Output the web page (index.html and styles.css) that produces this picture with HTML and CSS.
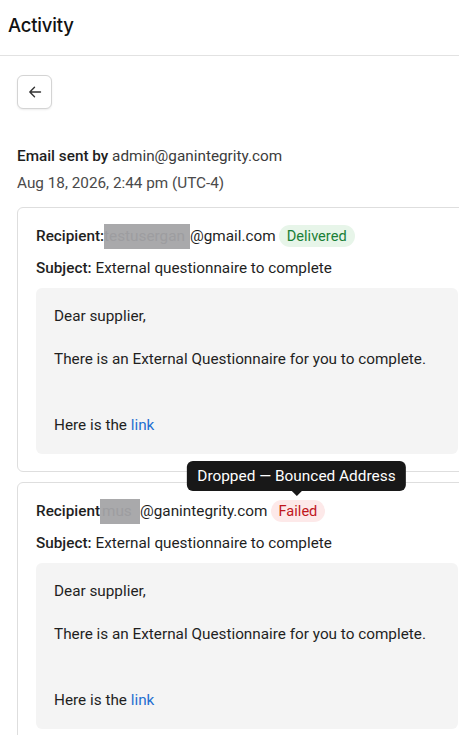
FILE: index.html
```html
<!DOCTYPE html>
<html>
<head>
<meta charset="utf-8">
<link rel="stylesheet" href="styles.css">
</head>
<body>
<header class="topbar"><h1 class="title">Activity</h1></header>
<main class="content">
  <button class="back" aria-label="Back">
    <svg width="14" height="14" viewBox="0 0 14 14" fill="none" stroke="#333" stroke-width="1.4" stroke-linecap="round" stroke-linejoin="round"><path d="M12.5 7H1.8M6.5 2.3L1.8 7l4.7 4.7"/></svg>
  </button>
  <div class="meta">
    <div class="meta-line"><span class="label">Email sent by</span> <span class="value">admin@ganintegrity.com</span></div>
    <div class="meta-date">Aug 18, 2026, 2:44 pm (UTC-4)</div>
  </div>
  <section class="card">
    <div class="row"><span class="label">Recipient:</span><span class="redact r1">testusergan</span>@gmail.com<span class="badge ok">Delivered</span></div>
    <div class="row subj"><span class="label">Subject:</span> External questionnaire to complete</div>
    <div class="msg">
      <p>Dear supplier,</p>
      <p>There is an External Questionnaire for you to complete.<br><br><br>Here is the <a href="#">link</a></p>
    </div>
  </section>
  <section class="card">
    <div class="row"><span class="label">Recipient</span><span class="redact r2">mus</span>@ganintegrity.com<span class="badge-wrap"><span class="tooltip">Dropped — Bounced Address</span><span class="badge fail">Failed</span></span></div>
    <div class="row subj"><span class="label">Subject:</span> External questionnaire to complete</div>
    <div class="msg">
      <p>Dear supplier,</p>
      <p>There is an External Questionnaire for you to complete.<br><br><br>Here is the <a href="#">link</a></p>
    </div>
  </section>
</main>
</body>
</html>
```
FILE: styles.css
```css
html, body { margin: 0; padding: 0; overflow: hidden; background: #fff; }
body { font-family: Roboto, "Noto Sans", sans-serif; font-size: 15.3px; color: #1f1f1f; width: 459px; height: 735px; }
.topbar { height: 55px; border-bottom: 1px solid #e2e2e2; display: flex; align-items: center; padding-left: 8px; }
.title { margin: 0; font-family: Inter, Roboto, sans-serif; font-size: 18.5px; font-weight: 500; color: #111; letter-spacing: -0.2px; position: relative; top: -3px; }
.content { padding: 19px 0 0 17px; }
.back { width: 35px; height: 34px; border: 1px solid #d4d4d4; border-radius: 6px; background: #fff; display: flex; align-items: center; justify-content: center; padding: 0; box-shadow: 0 1px 2px rgba(0,0,0,0.08); }
.meta { margin-top: 37px; }
.meta-line { line-height: 20px; }
.label { font-weight: 500; color: #1f1f1f; }
.value { color: #3c3c3c; }
.meta-date { color: #4a4a4a; margin-top: 7px; line-height: 20px; }
.card { width: 422px; border: 1px solid #dedede; border-radius: 6px; padding: 17px 18px 17px 18px; margin-top: 14px; }
.card + .card { margin-top: 10px; }
.row { display: flex; align-items: center; height: 22px; line-height: 22px; white-space: nowrap; }
.subj { margin-top: 10px; }
.subj .label { margin-right: 4px; }
.redact { background: #a9a9ab; color: #9d9da0; display: inline-block; height: 25px; line-height: 25px; overflow: hidden; }
.r1 { width: 86px; }
.r2 { width: 40px; padding-left: 2px; box-sizing: border-box; }
.badge { display: inline-block; height: 22px; line-height: 22px; padding: 0 8px; border-radius: 11px; margin-left: 3px; font-size: 14.6px; }
.ok { background: #e7f5e9; color: #1a7f37; }
.fail { background: #fde9e9; color: #c0171c; }
.badge-wrap { position: relative; display: inline-block; }
.tooltip { position: absolute; bottom: 31px; left: 50%; transform: translateX(-50%); background: #181818; color: #fff; border-radius: 6px; padding: 0 10px; height: 30px; line-height: 30px; white-space: nowrap; font-size: 15.4px; }
.tooltip::after { content: ""; position: absolute; left: 50%; bottom: -5px; margin-left: -6px; border-left: 6px solid transparent; border-right: 6px solid transparent; border-top: 6px solid #181818; }
.msg { background: #f4f4f4; border-radius: 6px; margin-top: 9px; padding: 17px 18px 18px; }
.msg p { margin: 0; line-height: 22px; }
.msg p + p { margin-top: 21px; }
.msg a { color: #1f6fd1; text-decoration: none; }
```
